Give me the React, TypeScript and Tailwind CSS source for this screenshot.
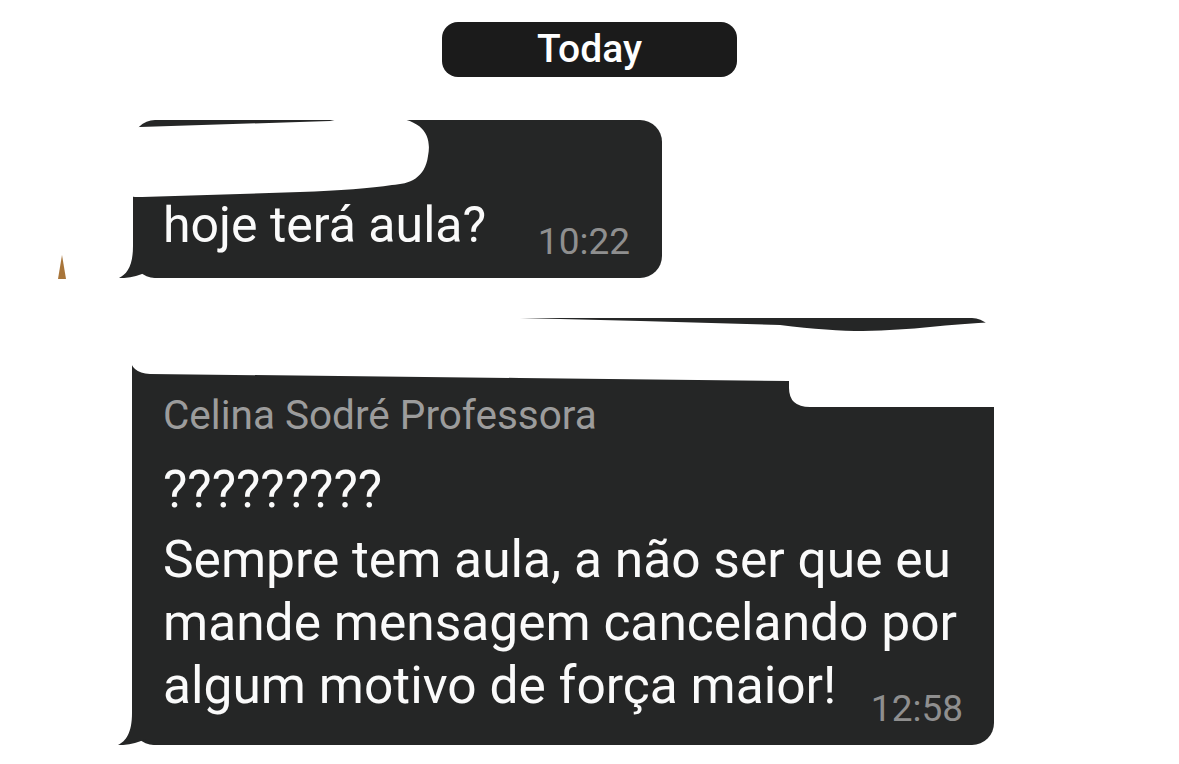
const bubbleTail = (
  <svg
    className="absolute left-[-16px] bottom-0"
    width="44"
    height="32"
    viewBox="0 0 44 32"
  >
    <path
      d="M16 0 C16 20 10 28 2 32 C12 32.5 22 30 29 26 C32 30 36 32 44 32 L44 0 Z"
      fill="#252626"
    />
  </svg>
);

function Redactions() {
  return (
    <svg
      className="absolute left-0 top-0 pointer-events-none"
      width="1179"
      height="764"
      viewBox="0 0 1179 764"
    >
      {/* tiny spike at left edge */}
      <polygon points="62,255 58,279 66,279" fill="#a8753a" />

      {/* first bubble scribble */}
      <path
        d="M121 134 Q124 127 140 127 L330 121 Q350 116 385 117 C424 118 432 136 428 156 C425 178 410 184 392 185 Q360 190 300 192 L142 197 Q122 198 121 186 Z"
        fill="#ffffff"
      />

      {/* second bubble scribble */}
      <path
        d="M130 326 Q132 317 150 317 L520 318 Q650 321 780 325 Q830 331 863 331 Q900 330 930 327 Q960 324 996 322 L996 407 L810 407 Q789 407 789 388 L789 381 L520 378 L150 374 Q130 373 130 356 Z"
        fill="#ffffff"
      />
    </svg>
  );
}

export default function App() {
  return (
    <div
      className="relative w-[1179px] h-[764px] overflow-hidden bg-white"
      style={{ fontFamily: 'Roboto, "Liberation Sans", sans-serif' }}
    >
      <div className="flex flex-col">
        <div className="mx-auto mt-[22px] w-[295px] h-[55px] rounded-[16px] bg-[#1b1b1b] flex items-center justify-center">
          <span className="text-white text-[39px] font-medium leading-none">Today</span>
        </div>

        <div className="relative ml-[133px] mt-[43px] w-[529px] rounded-[22px] bg-[#252626] pt-[75px] pb-[22px] pl-[30px] pr-[32px]">
          {bubbleTail}
          <div className="flex items-end justify-between">
            <span className="text-[50px] leading-[61px] text-[#fafafa] whitespace-nowrap">
              hoje terá aula?
            </span>
            <span className="text-[37px] leading-[44px] text-[#8f8f8f] mb-[-8px]">10:22</span>
          </div>
        </div>

        <div className="relative ml-[132px] mt-[40px] w-[862px] rounded-[22px] bg-[#252626] pt-[73px] pb-[28px] pl-[31px] pr-[31px]">
          {bubbleTail}
          <p className="text-[40.5px] leading-[48px] text-[#9c9c9c] whitespace-nowrap">
            Celina Sodré Professora
          </p>
          <div className="mt-[19px] text-[51.5px] leading-[63px] text-[#fafafa] whitespace-nowrap">
            <p className="mb-[7px]">?????????</p>
            <p>Sempre tem aula, a não ser que eu</p>
            <p>mande mensagem cancelando por</p>
            <div className="flex items-end justify-between">
              <span>algum motivo de força maior!</span>
              <span className="text-[37px] leading-[44px] text-[#8f8f8f] mb-[-14px]">12:58</span>
            </div>
          </div>
        </div>
      </div>

      <Redactions />
    </div>
  );
}
